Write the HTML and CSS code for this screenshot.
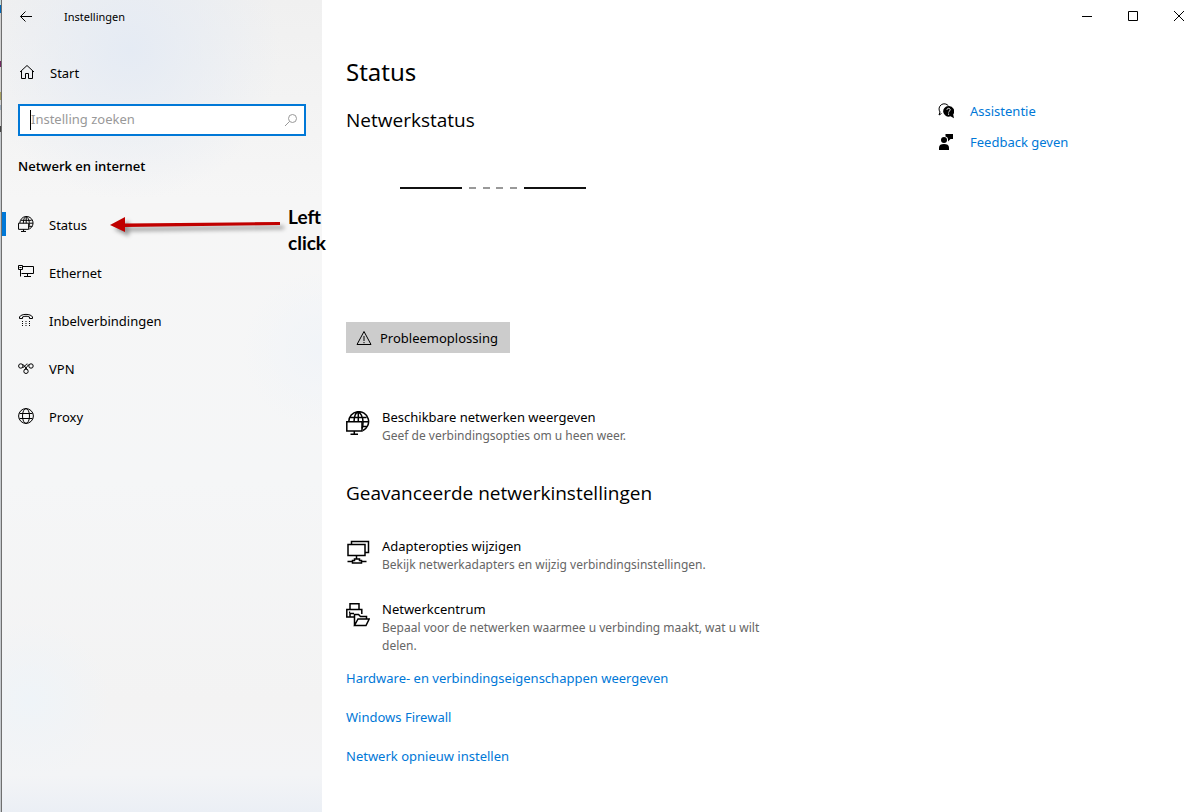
FILE: index.html
```html
<!doctype html>
<html lang="nl">
  <head>
    <meta charset="UTF-8" />
    <meta name="viewport" content="width=device-width, initial-scale=1.0" />
    <title>Instellingen</title>
    <link rel="stylesheet" href="styles.css">
  </head>
  <body>
    <!-- shared shapes -->
    <svg class="defs" width="0" height="0" aria-hidden="true">
      <symbol id="globe-screen" viewBox="0 0 24 24">
        <path d="M2.800 10.500a9.900 9.900 0 1 1 14.200 9M4.500 6.500h16M17 15.500h4.500M8 11c0-5 1.500-9.800 4-9.800s5 4.800 5 10.300c0 2-.2 4-.8 6M12.300 1.200V11M17 10.800h5.500" />
        <path d="M.8 10.800h15.200v9.200H.8zM4.500 23.200h7.500M8.300 20v3" />
      </symbol>
    </svg>

    <div class="window">
      <aside class="sidebar">
        <div class="title-bar">
          <button class="back" aria-label="Terug">
            <svg width="14" height="14" viewBox="0 0 14 14"><path d="M13 6.500H1.500M6.500 1.500l-5 5 5 5" /></svg>
          </button>
          <span class="app-title">Instellingen</span>
        </div>

        <a class="nav-link home" href="#">
          <svg width="16" height="16" viewBox="0 0 16 16"><path d="M1 8l7-6.500L15 8M2.500 7v7.500h4v-5h3v5h4V7" /></svg>
          <span>Start</span>
        </a>

        <div class="search">
          <input type="text" id="search" placeholder="Instelling zoeken" aria-label="Instelling zoeken" />
          <svg width="14" height="14" viewBox="0 0 14 14"><circle cx="8.500" cy="5.500" r="4" /><path d="M5.500 8.500L1 13" /></svg>
        </div>

        <h2 class="section-name">Netwerk en internet</h2>

        <nav>
          <a class="nav-link active" href="#">
            <svg class="bold" width="16" height="16"><use href="#globe-screen" /></svg>
            <span>Status</span>
          </a>
          <a class="nav-link" href="#">
            <svg width="16" height="16" viewBox="0 0 16 16"><path d="M5 2.500h10.500v7H3.500M.5 1.500h4v4h-4zM1.500 3.500h2M2.500 5.500v7M9.500 9.500v3M6 12.500h7" /></svg>
            <span>Ethernet</span>
          </a>
          <a class="nav-link" href="#">
            <svg width="16" height="16" viewBox="0 0 16 16"><path d="M1.500 6.500V5C3 1.500 13 1.500 14.500 5v1.500h-3V5c-2-1-5-1-7 0v1.500z" /><path d="M4 9.500h1m2.500 0h1m2.500 0h1M4 11.500h1m2.500 0h1m2.500 0h1M4 13.500h1m2.500 0h1m2.500 0h1" /></svg>
            <span>Inbelverbindingen</span>
          </a>
          <a class="nav-link" href="#">
            <svg width="16" height="16" viewBox="0 0 16 16"><circle cx="2.800" cy="6" r="2.200" /><circle cx="13" cy="6" r="2.200" /><circle cx="8" cy="11.300" r="2.200" /><path d="M4.500 4.500c2 0 2 3 5 5M11.500 4.500c-2 0-2 3-5 5M4.500 7.500c3 0 3-4 5-3.500" /></svg>
            <span>VPN</span>
          </a>
          <a class="nav-link" href="#">
            <svg width="16" height="16" viewBox="0 0 16 16"><circle cx="8" cy="8" r="7.400" /><ellipse cx="8" cy="8" rx="3.500" ry="7.400" /><path d="M1.500 5.500h13M1.500 10.500h13" /></svg>
            <span>Proxy</span>
          </a>
        </nav>
      </aside>

      <main>
        <div class="window-controls">
          <button aria-label="Minimaliseren"><svg width="10" height="10" viewBox="0 0 10 10"><path d="M0 5.500h10" /></svg></button>
          <button aria-label="Maximaliseren"><svg width="10" height="10" viewBox="0 0 10 10"><path d="M.5.500h9v9h-9z" /></svg></button>
          <button aria-label="Sluiten"><svg width="10" height="10" viewBox="0 0 10 10"><path d="M0 0l10 10M10 0L0 10" /></svg></button>
        </div>

        <div class="columns">
          <div class="content">
            <h1>Status</h1>
            <h2>Netwerkstatus</h2>

            <svg class="connection" width="186" height="2" viewBox="0 0 186 2">
              <path d="M0 1h62M124 1h62" />
              <path class="gap" d="M69 1h7M83 1h7M96 1h7M110 1h7" />
            </svg>

            <button class="troubleshoot">
              <svg width="16" height="16" viewBox="0 0 16 16"><path d="M8 1.500l7 13H1zM8 6v5M8 12v1.200" /></svg>
              Probleemoplossing
            </button>

            <a class="option" href="#">
              <svg width="24" height="24"><use href="#globe-screen" /></svg>
              <span class="option-text">
                <span class="option-title">Beschikbare netwerken weergeven</span>
                <span class="option-info">Geef de verbindingsopties om u heen weer.</span>
              </span>
            </a>

            <h2 class="advanced">Geavanceerde netwerkinstellingen</h2>

            <a class="option" href="#">
              <svg width="24" height="24" viewBox="0 0 24 24"><path d="M2 4.500h17v11H2zM5.500 4.500V1.500h17v11H19M10.500 15.500v4M1.500 21.500h5M15.500 21.500h5M6.500 20.500h2v-1.500h5v1.500h2v2.500h-9z" /></svg>
              <span class="option-text">
                <span class="option-title">Adapteropties wijzigen</span>
                <span class="option-info">Bekijk netwerkadapters en wijzig verbindingsinstellingen.</span>
              </span>
            </a>
            <a class="option" href="#">
              <svg width="24" height="24" viewBox="0 0 24 24"><path d="M4 6.500V.8h9v5.700M4 14H.8V6.500h15V11M4 14v-3.500h4M3 9.200h1.200M8.500 22.500V11.500h4l2 2h6v2.500M8.500 22.500l3.500-6.500h11.200l-3.200 6.500zM4 14h4" /></svg>
              <span class="option-text">
                <span class="option-title">Netwerkcentrum</span>
                <span class="option-info">Bepaal voor de netwerken waarmee u verbinding maakt, wat u wilt delen.</span>
              </span>
            </a>

            <ul class="links">
              <li><a href="#">Hardware- en verbindingseigenschappen weergeven</a></li>
              <li><a href="#">Windows Firewall</a></li>
              <li><a href="#">Netwerk opnieuw instellen</a></li>
            </ul>
          </div>

          <div class="help">
            <a href="#">
              <svg width="16" height="16" viewBox="0 0 16 16"><path d="M3.500 10.500L1 12l1-3A5 5 0 1 1 10.500 3" /><path class="solid" d="M10.500 3a5.300 5.300 0 1 0 2 10.200l3.500 2-.8-3.800A5.300 5.300 0 0 0 10.500 3z" /><path class="mark" d="M9 6.800c0-2 3.200-2 3.200 0 0 1.400-1.600 1.200-1.600 2.700M10.600 10.500v1.300" /></svg>
              Assistentie
            </a>
            <a href="#">
              <svg width="16" height="16" viewBox="0 0 16 16"><path class="solid" d="M7.500 0H15v5h-2.500L10 7.500V5A3 3 0 0 0 7.500 2.500z" /><circle class="solid" cx="6" cy="6" r="3" /><path class="solid" d="M1 16v-2.500C1 11 3 10 6 10s5 1 5 3.500V16z" /></svg>
              Feedback geven
            </a>
          </div>
        </div>
      </main>

      <!-- pointer at the Status item -->
      <div class="callout">
        <svg width="178" height="26" viewBox="0 0 178 26">
          <path class="arrow" d="M0 13L15 5v6.500L170 10v3L15 15v5z" />
        </svg>
        <p>Left click</p>
      </div>
    </div>
  </body>
</html>
```

FILE: styles.css
```css
*,
*::before {
  box-sizing: border-box;
}
body {
  margin: 0;
  font-family: "Noto Sans", "Open Sans", sans-serif;
  font-size: 13px;
  line-height: 18px;
  color: #000;
  background: #fff;
}
h1,
h2,
p,
ul {
  margin: 0;
  padding: 0;
}
a {
  color: #0078d7;
  text-decoration: none;
}
button {
  font: inherit;
  color: inherit;
  border: 0;
  padding: 0;
  background: none;
}
svg {
  display: block;
  flex: none;
  fill: none;
  stroke: #000;
  stroke-width: 1;
}
.defs {
  position: absolute;
}
.solid {
  fill: #000;
  stroke: none;
}

.window {
  position: relative;
  display: flex;
  min-height: 100vh;
}

/* Sidebar */
.sidebar {
  position: relative;
  width: 322px;
  flex: none;
  padding-left: 2px;
  background:
    radial-gradient(circle at 130px 50px, #e5ebf4, rgba(229, 235, 244, 0) 150px),
    radial-gradient(circle at 322px 350px, #f1f4f8, rgba(241, 244, 248, 0) 80px),
    radial-gradient(circle at 30px 700px, #eff4f8, rgba(239, 244, 248, 0) 80px),
    linear-gradient(#f0f0f0, #f6f6f6 200px, #f5f6f7 480px, #f3f3f3 700px, #f3f4f6 775px, #ebeff5);
}
/* sliver of the desktop behind the window */
.sidebar::before {
  content: "";
  position: absolute;
  top: 0;
  bottom: 0;
  left: 0;
  width: 2px;
  border-right: 1px solid #6f6f6f;
  background: linear-gradient(#c8dcdc 5px, #0067b8 5px 13px, #d0d0d0 13px 61px, #702860 61px 67px, #d0d0d0 67px 92px, #a8a060 92px 100px, #d0d0d0 100px 105px, #9ab 105px 110px, #d0d0d0 110px 126px, #444 126px 132px, #c4c8cc 132px);
}
.title-bar {
  display: flex;
  align-items: center;
  height: 33px;
  padding-left: 17px;
  font-size: 11px;
}
.app-title {
  margin-left: 31px;
}
.nav-link {
  position: relative;
  display: flex;
  align-items: center;
  gap: 15px;
  height: 48px;
  padding-left: 16px;
  color: #000;
}
.nav-link svg {
  margin-bottom: 2px;
}
.nav-link.home {
  margin-top: 16px;
  padding-left: 17px;
}
.nav-link.active::before {
  content: "";
  position: absolute;
  left: 0;
  top: 11px;
  width: 4px;
  height: 24px;
  background: #0078d7;
}
.bold {
  stroke-width: 1.5;
}
.search {
  display: flex;
  align-items: center;
  height: 32px;
  margin: 7px 16px 0;
  padding: 0 6px 0 10px;
  border: 2px solid #0078d7;
  background: #fff;
}
.search input {
  flex: 1;
  min-width: 0;
  height: 20px;
  padding: 0 0 2px;
  border: 0;
  border-left: 1px solid #000;
  outline: none;
  font: inherit;
  background: none;
}
.search input::placeholder {
  color: #999;
  opacity: 1;
}
.search svg {
  stroke: #999;
}
.section-name {
  margin: 21px 16px 25px;
  font-size: 13px;
  line-height: 19px;
  font-weight: 600;
}

/* Main pane */
main {
  flex: 1;
  min-width: 0;
}
.window-controls {
  display: flex;
  justify-content: flex-end;
  height: 32px;
  padding-right: 2px;
}
.window-controls button {
  display: flex;
  align-items: center;
  justify-content: center;
  width: 46px;
}
.columns {
  display: grid;
  grid-template-columns: minmax(0, 592px) 1fr;
  padding: 24px 0 24px 24px;
}
h1 {
  font-size: 24px;
  line-height: 32px;
  font-weight: 400;
}
h2 {
  font-family: "Open Sans", "Noto Sans", sans-serif;
  font-size: 19px;
  line-height: 28px;
  font-weight: 400;
}
.content h2 {
  margin-top: 18px;
}
.connection {
  margin: 53px 0 0 54px;
  stroke: #111;
  stroke-width: 2;
}
.connection .gap {
  stroke: #999;
}
.troubleshoot {
  display: flex;
  align-items: center;
  gap: 8px;
  height: 31px;
  margin: 133px 0 54px;
  padding: 0 12px 0 10px;
  background: #ccc;
}
.option {
  display: flex;
  gap: 12px;
  max-width: 424px;
  color: #000;
}
.option svg {
  margin-top: 4px;
  stroke-width: 1.5;
}
.option + .option {
  margin-top: 25px;
}
.option-title,
.option-info {
  display: block;
}
.option-title {
  line-height: 20px;
}
.option-info {
  font-size: 12px;
  color: #666;
}
.content .advanced {
  margin: 34px 0 29px;
}
.links {
  margin-top: 14px;
  list-style: none;
}
.links li + li {
  margin-top: 21px;
}
.help {
  display: flex;
  flex-direction: column;
  gap: 13px;
  padding-top: 46px;
}
.help a {
  display: flex;
  align-items: center;
  gap: 16px;
}
.help .mark {
  stroke: #fff;
}

/* Arrow and note lying over the window */
.callout {
  position: absolute;
  left: 110px;
  top: 204px;
  display: flex;
}
.callout svg {
  margin-top: 8px;
  filter: drop-shadow(4px 4px 2px rgba(0, 0, 0, 0.4));
}
.arrow {
  fill: #c00000;
  stroke: none;
}
.callout p {
  width: 44px;
  font-family: Lato, "Open Sans", sans-serif;
  font-size: 19px;
  line-height: 26px;
  font-weight: 700;
}
```
